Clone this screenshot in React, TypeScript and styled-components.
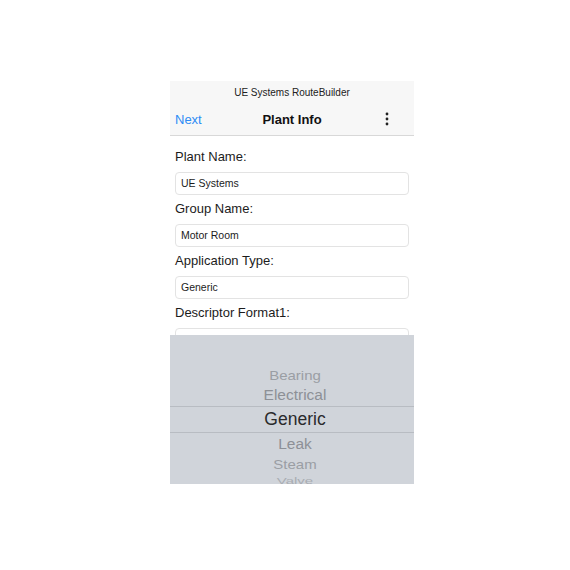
import styled, {createGlobalStyle} from 'styled-components';

const GlobalStyle = createGlobalStyle`
  body {
    margin: 0;
    background: #ffffff;
    font-family: 'Liberation Sans', Arial, sans-serif;
  }
`;

const fields = [
	{label: 'Plant Name:', value: 'UE Systems'},
	{label: 'Group Name:', value: 'Motor Room'},
	{label: 'Application Type:', value: 'Generic'},
	{label: 'Descriptor Format1:', value: '10.0'},
];

const options = [
	{text: 'Bearing', height: 18, size: 15, scale: 0.8, color: '#9a9ea4'},
	{text: 'Electrical', height: 22, size: 15.5, scale: 0.95, color: '#8d9096'},
	{text: 'Generic', height: 27, size: 17.5, scale: 1, color: '#2a2a2c', selected: true},
	{text: 'Leak', height: 22, size: 15.5, scale: 0.95, color: '#8d9096'},
	{text: 'Steam', height: 18, size: 15, scale: 0.8, color: '#9a9ea4'},
	{text: 'Valve', height: 14, size: 15, scale: 0.6, color: '#a9adb3'},
];

const MoreIcon = () => (
	<svg width='4' height='14' viewBox='0 0 4 14'>
		<circle cx='2' cy='2' r='1.4' fill='#222' />
		<circle cx='2' cy='7' r='1.4' fill='#222' />
		<circle cx='2' cy='12' r='1.4' fill='#222' />
	</svg>
);

export default function App() {
	return (
		<>
			<GlobalStyle />
			<StyledScreen>
				<StyledHeader>
					<StyledAppTitle>UE Systems RouteBuilder</StyledAppTitle>
					<StyledNav>
						<StyledNavButton>Next</StyledNavButton>
						<StyledNavTitle>Plant Info</StyledNavTitle>
						<StyledMenu>
							<MoreIcon />
						</StyledMenu>
					</StyledNav>
				</StyledHeader>
				<StyledForm>
					{fields.map(f => (
						<StyledField key={f.label}>
							<StyledLabel>{f.label}</StyledLabel>
							<StyledInput>{f.value}</StyledInput>
						</StyledField>
					))}
				</StyledForm>
				<StyledPicker>
					{options.map(o => (
						<StyledOption
							key={o.text}
							$height={o.height}
							$size={o.size}
							$scale={o.scale}
							$color={o.color}
							$selected={!!o.selected}
						>
							<span>{o.text}</span>
						</StyledOption>
					))}
				</StyledPicker>
			</StyledScreen>
		</>
	);
}

const StyledScreen = styled.div`
    display: flex;
    flex-direction: column;
    width: 244px;
    height: 403px;
    margin: 81px 0 0 170px;
    background: #ffffff;
    overflow: hidden;
`;

const StyledHeader = styled.div`
    flex: none;
    background: #f7f7f7;
    border-bottom: 1px solid #d8d8d8;
`;

const StyledAppTitle = styled.div`
    height: 23px;
    line-height: 23px;
    text-align: center;
    font-size: 10px;
    color: #222;
`;

const StyledNav = styled.div`
    display: grid;
    grid-template-columns: 1fr auto 1fr;
    align-items: center;
    height: 30px;
    padding: 0 5px 1px;
`;

const StyledNavButton = styled.div`
    font-size: 13px;
    color: #2d8cf5;
`;

const StyledNavTitle = styled.div`
    font-size: 13px;
    font-weight: bold;
    color: #111;
`;

const StyledMenu = styled.div`
    display: flex;
    justify-content: flex-end;
    padding-right: 20px;
`;

const StyledForm = styled.div`
    flex: 1;
    overflow: hidden;
    padding: 12px 5px 0;
`;

const StyledField = styled.div`
    margin-bottom: 5px;
`;

const StyledLabel = styled.div`
    height: 18px;
    line-height: 18px;
    margin-bottom: 6px;
    font-size: 13px;
    color: #1c1c1c;
`;

const StyledInput = styled.div`
    box-sizing: border-box;
    height: 23px;
    line-height: 20px;
    padding: 0 5px;
    border: 1px solid #e3e3e3;
    border-radius: 4px;
    font-size: 10.5px;
    color: #1c1c1c;
`;

const StyledPicker = styled.div`
    flex: none;
    height: 149px;
    padding: 31px 0 0 6px;
    box-sizing: border-box;
    background: #d0d4da;
    overflow: hidden;
`;

const StyledOption = styled.div<{$height: number; $size: number; $scale: number; $color: string; $selected: boolean}>`
    box-sizing: border-box;
    display: flex;
    align-items: center;
    justify-content: center;
    height: ${p => p.$height}px;
    margin-left: ${p => (p.$selected ? '-6px' : '0')};
    padding-left: ${p => (p.$selected ? '6px' : '0')};
    font-family: 'Liberation Sans', Arial, sans-serif;
    font-size: ${p => p.$size}px;
    color: ${p => p.$color};
    border-top: ${p => (p.$selected ? '1px solid #b8bcc2' : 'none')};
    border-bottom: ${p => (p.$selected ? '1px solid #b8bcc2' : 'none')};

    span {
        display: inline-block;
        transform: scaleY(${p => p.$scale});
    }
`;
